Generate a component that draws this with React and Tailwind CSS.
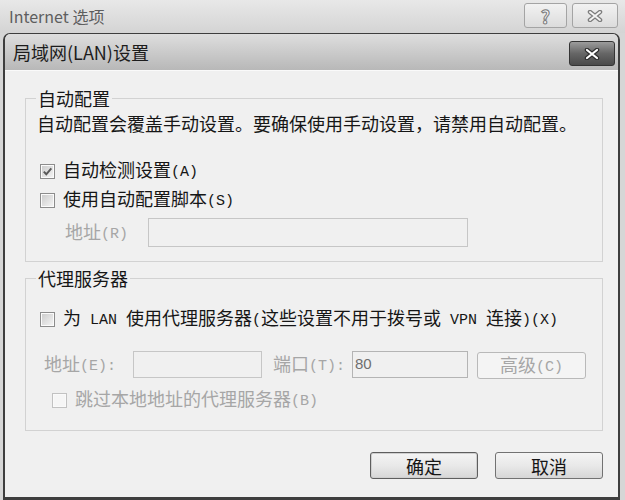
import { useState } from "react";

// half-width run (SimSun-like monospace look)
function H({ children }) {
  return (
    <span className="font-['Liberation_Mono',monospace] text-[15px] whitespace-pre align-[1px]">
      {children}
    </span>
  );
}

function Check({ checked, disabled }) {
  return (
    <span
      className={`w-[15px] h-[15px] shrink-0 border flex items-center justify-center ${
        disabled ? "border-[#c2c2c2] bg-[#fafafa]" : "border-[#8c8c8c] bg-[#fbfbfb]"
      }`}
    >
      <span
        className={`w-[11px] h-[11px] flex items-center justify-center ${
          disabled ? "bg-[#f6f6f6]" : "bg-linear-to-br from-[#cdcdcd] to-[#f3f3f3]"
        }`}
      >
        {checked && (
          <svg width="11" height="11" viewBox="0 0 11 11">
            <path d="M1.8 5.6 L4.3 8.3 L9.3 2.3" fill="none" stroke="#5a5a5a" strokeWidth="2" />
          </svg>
        )}
      </span>
    </span>
  );
}

function CheckRow({ checked, disabled, className, children }) {
  return (
    <div className={`flex items-center h-[22px] ${className}`}>
      <Check checked={checked} disabled={disabled} />
      <span className={`ml-[8px] leading-[22px] whitespace-nowrap ${disabled ? "text-[#a6a6a6]" : ""}`}>
        {children}
      </span>
    </div>
  );
}

function Button({ children, def }) {
  return (
    <div
      className={`w-[108px] h-[27px] rounded-[3px] border flex items-center justify-center leading-[22px] bg-linear-to-b from-[#f4f4f4] via-[#e9e9e9] to-[#d6d6d6] ${
        def ? "border-[#5e5e5e] shadow-[inset_0_0_0_1px_#cfcfcf]" : "border-[#727272]"
      }`}
    >
      <span>{children}</span>
    </div>
  );
}

export default function App() {
  const [auto, setAuto] = useState(true);

  return (
    <div className="w-[625px] h-[500px] bg-[#d6d6d6] flex flex-col overflow-hidden font-['Noto_Sans_CJK_SC',sans-serif] text-[18px] text-[#161616]">
      {/* outer window title */}
      <div className="h-[33px] shrink-0 flex items-start bg-linear-to-b from-[#e8e8e8] to-[#d4d4d4]">
        <span className="ml-[9px] mt-[5px] text-[16px] leading-[22px] text-[#5e5e5e]">Internet 选项</span>
        <div className="ml-auto mt-[3px] mr-[7px] flex gap-[5px]">
          <div className="w-[43px] h-[25px] rounded-[3px] border border-[#a4a4a4] bg-linear-to-b from-[#f2f2f2] to-[#dcdcdc] flex items-center justify-center text-[18px] font-bold text-[#f4f4f4] [-webkit-text-stroke:1px_#7a7a7a] leading-none">
            ?
          </div>
          <div className="w-[46px] h-[25px] rounded-[3px] border border-[#a4a4a4] bg-linear-to-b from-[#f2f2f2] to-[#dcdcdc] flex items-center justify-center">
            <svg width="16" height="12" viewBox="0 0 16 12">
              <path d="M3 2 L13 10 M13 2 L3 10" stroke="#7c7c7c" strokeWidth="4.5" strokeLinecap="round" />
              <path d="M3 2 L13 10 M13 2 L3 10" stroke="#f4f4f4" strokeWidth="2" strokeLinecap="round" />
            </svg>
          </div>
        </div>
      </div>

      {/* LAN dialog */}
      <div className="flex-1 ml-[3px] mr-[5px] flex flex-col rounded-t-[7px] border-x-2 border-t border-b-[3px] border-[#3e3e3e] overflow-hidden">
        <div className="h-[36px] shrink-0 flex items-center bg-linear-to-b from-[#dedede] to-[#b8b8b8]">
          <span className="ml-[8px] leading-[22px] text-[#1c1c1c]">局域网(LAN)设置</span>
          <div className="ml-auto mr-[3px] mt-[3px] w-[46px] h-[25px] rounded-[3px] border border-[#343434] bg-linear-to-b from-[#9c9c9c] via-[#666666] to-[#4a4a4a] flex items-center justify-center">
            <svg width="16" height="12" viewBox="0 0 16 12">
              <path d="M3 2 L13 10 M13 2 L3 10" stroke="#2e2e2e" strokeWidth="4.5" strokeLinecap="round" />
              <path d="M3 2 L13 10 M13 2 L3 10" stroke="#fff" strokeWidth="2.2" strokeLinecap="round" />
            </svg>
          </div>
        </div>

        <div className="flex-1 flex flex-col bg-[#f0f0f0] border-t border-[#fafafa] pl-[20px] pr-[15px] pt-[17px]">
          {/* auto config group */}
          <fieldset className="border border-[#d2d2d2] pb-[14px]">
            <legend className="ml-[10px] px-[2px] leading-[20px]">自动配置</legend>
            <div className="ml-[11px] mt-[4px] leading-[22px] whitespace-nowrap">
              自动配置会覆盖手动设置。要确保使用手动设置，请禁用自动配置。
            </div>
            <div onClick={() => setAuto(!auto)}>
              <CheckRow checked={auto} className="ml-[14px] mt-[26px]">
                自动检测设置<H>(A)</H>
              </CheckRow>
            </div>
            <CheckRow className="ml-[14px] mt-[7px]">
              使用自动配置脚本<H>(S)</H>
            </CheckRow>
            <div className="flex items-center mt-[7px] ml-[39px]">
              <span className="w-[83px] text-[#a6a6a6] leading-[22px]">
                地址<H>(R)</H>
              </span>
              <div className="w-[320px] h-[29px] border border-[#c6c6c6] bg-[#f0f0f0]" />
            </div>
          </fieldset>

          {/* proxy group */}
          <fieldset className="mt-[6px] border border-[#d2d2d2] pb-[19px]">
            <legend className="ml-[10px] px-[2px] leading-[20px]">代理服务器</legend>
            <CheckRow className="ml-[14px] mt-[20px]">
              为<H> LAN </H>使用代理服务器<H>(</H>这些设置不用于拨号或<H> VPN </H>连接<H>)(X)</H>
            </CheckRow>
            <div className="flex items-center mt-[20px] ml-[18px]">
              <span className="w-[89px] text-[#a6a6a6] leading-[22px] whitespace-nowrap">
                地址<H>(E):</H>
              </span>
              <div className="w-[129px] h-[27px] border border-[#c6c6c6] bg-[#f0f0f0]" />
              <span className="ml-[11px] w-[79px] text-[#a6a6a6] leading-[22px] whitespace-nowrap">
                端口<H>(T):</H>
              </span>
              <div className="w-[116px] h-[27px] border border-[#b4b4b4] bg-[#f0f0f0] flex items-center pl-[2px] font-['Liberation_Sans',sans-serif] text-[15px] text-[#6e6e6e]">
                80
              </div>
              <div className="ml-[9px] mt-[2px] w-[109px] h-[27px] rounded-[3px] border border-[#b9b9b9] bg-[#f4f4f4] flex items-center justify-center text-[#a6a6a6] leading-[22px] whitespace-nowrap">
                <span>
                  高级<H>(C)</H>
                </span>
              </div>
            </div>
            <CheckRow disabled className="ml-[26px] mt-[10px]">
              跳过本地地址的代理服务器<H>(B)</H>
            </CheckRow>
          </fieldset>

          <div className="flex justify-end gap-[17px] mt-[21px]">
            <Button def>确定</Button>
            <Button>取消</Button>
          </div>
        </div>
      </div>
    </div>
  );
}
